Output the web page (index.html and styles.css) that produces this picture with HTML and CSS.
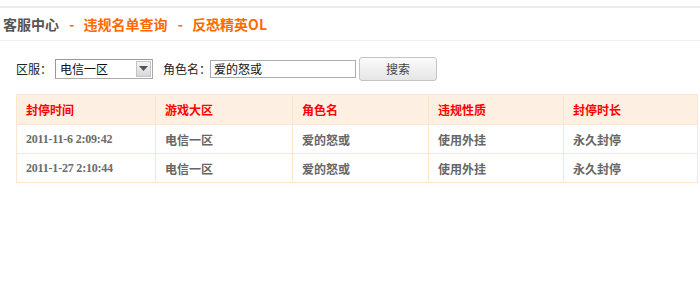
FILE: index.html
```html
<!doctype html>
<html>
	<head>
		<meta charset="utf-8">
		<link rel="stylesheet" href="styles.css">
	</head>
	<body>
		<div class="topline"></div>
		<div class="crumb">
			<span class="home">客服中心</span>
			<span class="sep">-</span>
			<span class="link">违规名单查询</span>
			<span class="sep">-</span>
			<span class="link">反恐精英OL</span>
		</div>

		<div class="search">
			<span class="label">区服：</span>
			<div class="select">
				<span class="select-text">电信一区</span>
				<span class="select-arrow">
					<svg width="9" height="5" viewBox="0 0 9 5"><path d="M0 0 H9 L4.5 5 Z" fill="#4a5566"/></svg>
				</span>
			</div>
			<span class="label role">角色名：</span>
			<input class="name" type="text" value="爱的怒或">
			<button class="btn">搜索</button>
		</div>

		<table class="list">
			<thead>
				<tr>
					<th>封停时间</th>
					<th>游戏大区</th>
					<th>角色名</th>
					<th>违规性质</th>
					<th>封停时长</th>
				</tr>
			</thead>
			<tbody>
				<tr>
					<td class="date">2011-11-6 2:09:42</td>
					<td>电信一区</td>
					<td>爱的怒或</td>
					<td>使用外挂</td>
					<td>永久封停</td>
				</tr>
				<tr>
					<td class="date">2011-1-27 2:10:44</td>
					<td>电信一区</td>
					<td>爱的怒或</td>
					<td>使用外挂</td>
					<td>永久封停</td>
				</tr>
			</tbody>
		</table>
	</body>
</html>
```

FILE: styles.css
```css
body, html {
	margin: 0;
	padding: 0;
	background: #fff;
	font-family: "Noto Sans CJK SC", "DejaVu Sans", sans-serif;
	font-size: 12px;
	color: #333;
}

.topline {
	margin-top: 6px;
	height: 2px;
	background: #ebebeb;
}

.crumb {
	height: 32px;
	line-height: 32px;
	padding-left: 3px;
	border-bottom: 1px solid #f0f0f0;
	font-size: 14px;
	font-weight: bold;
	white-space: nowrap;
}

.crumb .home {
	color: #555;
}

.crumb .sep {
	color: #ff6a00;
	margin: 0 6px 0 7px;
}

.crumb .link {
	color: #ff6a00;
}

.search {
	display: flex;
	align-items: center;
	padding: 15px 0 0 16px;
	height: 25px;
}

.label {
	color: #222;
	margin-right: 3px;
}

.label.role {
	margin-right: -1px;
}

.select {
	display: flex;
	align-items: center;
	width: 96px;
	height: 18px;
	border: 1px solid #999;
	border-color: #999 #aaa #aaa #999;
	margin-right: 10px;
	background: #fff;
}

.select-text {
	flex: 1;
	padding-left: 4px;
	color: #111;
}

.select-arrow {
	display: flex;
	align-items: center;
	justify-content: center;
	width: 15px;
	height: 16px;
	margin-right: 1px;
	background: linear-gradient(#f4f4f4, #d8d8d8);
	border: 1px solid #c4c4c4;
	box-sizing: border-box;
}

.name {
	width: 146px;
	height: 18px;
	box-sizing: border-box;
	border: 1px solid #a5acb5;
	padding: 0 3px;
	margin: 0 3px 0 0;
	font-family: inherit;
	font-size: 12px;
	color: #111;
	outline: none;
}

.btn {
	width: 78px;
	height: 24px;
	border: 1px solid #c4c4c4;
	border-radius: 3px;
	background: linear-gradient(#fbfbfb, #e6e6e6);
	font-family: inherit;
	font-size: 12px;
	color: #444;
	padding: 0;
}

.list {
	margin: 13px 0 0 16px;
	width: 682px;
	border-collapse: collapse;
	table-layout: fixed;
	border: 1px solid #fce6cf;
}

.list th:nth-child(1) { width: 129px; }
.list th:nth-child(2) { width: 127px; }
.list th:nth-child(3) { width: 126px; }
.list th:nth-child(4) { width: 125px; }

.list th, .list td {
	border: 1px solid #fce6cf;
	text-align: left;
	padding: 0 0 0 9px;
	height: 28px;
	font-weight: bold;
}

.list th {
	height: 29px;
	background: #fdf0e3;
	color: #f00;
}

.list td {
	color: #666;
}

.list td.date {
	font-family: "Liberation Serif", serif;
	font-size: 12px;
	letter-spacing: -0.2px;
	color: #6b6b6b;
}
```
